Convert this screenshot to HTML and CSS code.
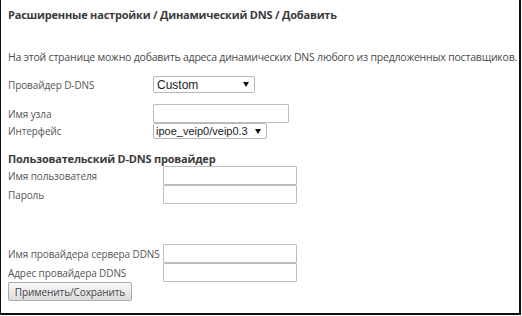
FILE: index.html
```html
<!DOCTYPE html>
<html lang="ru">
<head>
<meta charset="UTF-8" />
<title>Динамический DNS</title>
<link rel="stylesheet" href="styles.css">
</head>
<body>
  <div class="frame">
    <h1 class="page-title">Расширенные настройки / Динамический DNS / Добавить</h1>
    <p class="intro">На этой странице можно добавить адреса динамических DNS любого из предложенных поставщиков.</p>

    <!-- Provider section -->
    <div class="form narrow">
      <div class="row row-provider">
        <span class="label">Провайдер D-DNS</span>
        <div class="select select-provider"><span>Custom</span><i class="arrow"></i></div>
      </div>
      <div class="row row-host">
        <span class="label">Имя узла</span>
        <div class="field field-host"></div>
      </div>
      <div class="row row-iface">
        <span class="label">Интерфейс</span>
        <div class="select select-iface"><span>ipoe_veip0/veip0.3</span><i class="arrow"></i></div>
      </div>
    </div>

    <h2 class="section-title">Пользовательский D-DNS провайдер</h2>

    <div class="form wide">
      <div class="row">
        <span class="label">Имя пользователя</span>
        <div class="field"></div>
      </div>
      <div class="row">
        <span class="label">Пароль</span>
        <div class="field"></div>
      </div>
    </div>

    <div class="form wide server">
      <div class="row">
        <span class="label">Имя провайдера сервера DDNS</span>
        <div class="field"></div>
      </div>
      <div class="row">
        <span class="label">Адрес провайдера DDNS</span>
        <div class="field"></div>
      </div>
    </div>

    <button class="btn">Применить/Сохранить</button>
  </div>
</body>
</html>
```

FILE: styles.css
```css
* {
  margin: 0;
  padding: 0;
  box-sizing: border-box;
}

html, body {
  background: #fff;
  font-family: 'Open Sans', 'DejaVu Sans', sans-serif;
  color: #444;
}

.frame {
  width: 521px;
  height: 315px;
  border: solid #111;
  border-width: 0 2px 2px 1px;
  padding: 8px 0 0 7px;
}

.page-title {
  font-size: 11px;
  letter-spacing: -0.2px;
  font-weight: bold;
  line-height: 14px;
  color: #3a3a3a;
}

.intro {
  margin-top: 28px;
  font-size: 10.5px;
  letter-spacing: -0.2px;
  line-height: 14px;
  color: #4a4a4a;
  white-space: nowrap;
}

.form .row {
  display: flex;
  align-items: center;
}

.label {
  font-size: 10px;
  letter-spacing: -0.1px;
  color: #555;
  white-space: nowrap;
}

.narrow .label { width: 145px; }
.wide .label { width: 155px; }

.narrow { margin-top: 12px; }

.row-provider { height: 17px; }
.row-host { height: 19px; margin-top: 11px; }
.row-iface { height: 16px; }

.select {
  display: flex;
  align-items: center;
  justify-content: space-between;
  height: 17px;
  border: 1px solid #b8b8b8;
  border-radius: 2px;
  background: #fff;
  padding: 0 5px 0 3px;
  font-family: 'Liberation Sans', Arial, sans-serif;
  font-size: 12px;
  color: #222;
}

.select-provider { width: 102px; }
.select-iface { width: 114px; height: 16px; padding-left: 2px; font-size: 11px; }

.arrow {
  width: 0;
  height: 0;
  border-left: 3px solid transparent;
  border-right: 3px solid transparent;
  border-top: 5px solid #111;
}

.field {
  height: 19px;
  width: 134px;
  border: 1px solid #bdbdbd;
  border-radius: 1px;
  background: #fff;
}

.field-host { width: 136px; }

.wide .row { height: 19px; }

.section-title {
  margin-top: 13px;
  font-size: 11px;
  letter-spacing: -0.2px;
  font-weight: bold;
  line-height: 14px;
  color: #3a3a3a;
}

.server { margin-top: 40px; }

.btn {
  display: block;
  margin-top: 0;
  width: 124px;
  height: 19px;
  padding: 0;
  border: 1px solid #aaa;
  border-radius: 2px;
  background: linear-gradient(#f8f8f8, #dcdcdc);
  font-family: 'Open Sans', 'DejaVu Sans', sans-serif;
  font-size: 10px;
  letter-spacing: -0.1px;
  white-space: nowrap;
  color: #444;
}
```
